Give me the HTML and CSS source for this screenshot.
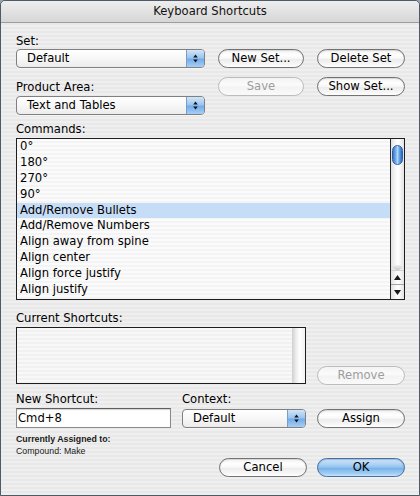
FILE: index.html
```html
<!DOCTYPE html>
<html>
<head>
<meta charset="utf-8">
<title>Keyboard Shortcuts</title>
<link rel="stylesheet" href="styles.css">
</head>
<body>
<div class="window">
  <div class="titlebar">Keyboard Shortcuts</div>
  <div class="content">
    <div class="top">
      <div class="label l-set">Set:</div>
      <div class="popup p-set">
        <span class="popup-text">Default</span>
        <span class="popup-arrows"><svg width="7" height="11" viewBox="0 0 7 11"><path d="M3.5 1.5 L5.8 4.5 H1.2Z M3.5 9.5 L5.8 6.5 H1.2Z" fill="#151515"/></svg></span>
      </div>
      <button class="btn b-new">New Set...</button>
      <button class="btn b-delete">Delete Set</button>
      <div class="label l-area">Product Area:</div>
      <button class="btn disabled b-save">Save</button>
      <button class="btn b-show">Show Set...</button>
      <div class="popup p-area">
        <span class="popup-text">Text and Tables</span>
        <span class="popup-arrows"><svg width="7" height="11" viewBox="0 0 7 11"><path d="M3.5 1.5 L5.8 4.5 H1.2Z M3.5 9.5 L5.8 6.5 H1.2Z" fill="#151515"/></svg></span>
      </div>
    </div>

    <div class="label l-commands">Commands:</div>
    <div class="list">
      <ul class="rows">
        <li>0°</li>
        <li>180°</li>
        <li>270°</li>
        <li>90°</li>
        <li class="selected">Add/Remove Bullets</li>
        <li>Add/Remove Numbers</li>
        <li>Align away from spine</li>
        <li>Align center</li>
        <li>Align force justify</li>
        <li>Align justify</li>
      </ul>
      <div class="scrollbar">
        <div class="sb-track">
          <div class="sb-thumb"></div>
          <div class="sb-cap"></div>
        </div>
        <div class="sb-arrow up"><svg width="7" height="5" viewBox="0 0 7 5"><path d="M3.5 0 L7 5 H0Z" fill="#1a1a1a"/></svg></div>
        <div class="sb-arrow down"><svg width="7" height="5" viewBox="0 0 7 5"><path d="M3.5 5 L7 0 H0Z" fill="#1a1a1a"/></svg></div>
      </div>
    </div>

    <div class="label l-current">Current Shortcuts:</div>
    <div class="current-row">
      <div class="shortcuts-box">
        <div class="sc-area"></div>
        <div class="sc-track"></div>
      </div>
      <button class="btn disabled remove">Remove</button>
    </div>

    <div class="assign-grid">
      <div class="label">New Shortcut:</div>
      <div class="label">Context:</div>
      <div></div>
      <div class="field">Cmd+8</div>
      <div class="popup p-context">
        <span class="popup-text">Default</span>
        <span class="popup-arrows"><svg width="7" height="11" viewBox="0 0 7 11"><path d="M3.5 1.5 L5.8 4.5 H1.2Z M3.5 9.5 L5.8 6.5 H1.2Z" fill="#151515"/></svg></span>
      </div>
      <button class="btn">Assign</button>
    </div>

    <div class="assigned">
      <div class="assigned-title">Currently Assigned to:</div>
      <div class="assigned-value">Compound: Make</div>
    </div>

    <div class="actions">
      <button class="btn">Cancel</button>
      <button class="btn default">OK</button>
    </div>
  </div>
</div>
</body>
</html>
```

FILE: styles.css
```css
* { box-sizing: border-box; }

html, body {
  margin: 0;
  padding: 0;
}

body {
  width: 420px;
  height: 496px;
  background: #9aa2ad;
  font-family: "DejaVu Sans", "Noto Sans", sans-serif;
  font-size: 11.6px;
  color: #000;
  overflow: hidden;
}

.window {
  width: 420px;
  height: 496px;
  border: 1px solid #4f5a68;
  border-radius: 5px 5px 0 0;
  background: repeating-linear-gradient(to bottom, #efefef 0, #efefef 2px, #e8e8e8 2px, #e8e8e8 4px);
  display: flex;
  flex-direction: column;
  overflow: hidden;
}

.titlebar {
  flex: none;
  height: 22px;
  line-height: 21px;
  text-align: center;
  background: linear-gradient(to bottom, #eeeeee, #d6d6d6);
  border-bottom: 1px solid #9d9d9d;
  border-radius: 4px 4px 0 0;
  color: #111;
}

.content {
  flex: 1;
  padding: 0 14px 0 15px;
  display: flex;
  flex-direction: column;
}

.label {
  line-height: 14px;
  white-space: nowrap;
}

/* ---------- top grid ---------- */
.top {
  margin-top: 11px;
  display: grid;
  grid-template-columns: 189px 86px 88px;
  grid-template-rows: 15px 28px 19px 19px;
  column-gap: 13px;
}

.l-set { grid-column: 1; grid-row: 1; }
.p-set { grid-column: 1; grid-row: 2; }
.b-new { grid-column: 2; grid-row: 2; }
.b-delete { grid-column: 3; grid-row: 2; }
.l-area { grid-column: 1; grid-row: 3; align-self: center; }
.b-save { grid-column: 2; grid-row: 3; }
.b-show { grid-column: 3; grid-row: 3; }
.p-area { grid-column: 1; grid-row: 4; }

.top .btn { align-self: start; }

/* ---------- popup ---------- */
.popup {
  height: 19px;
  display: flex;
  align-items: stretch;
  border: 1px solid #808080;
  border-radius: 4px;
  background: linear-gradient(to bottom, #ffffff 0%, #f7f7f7 50%, #ececec 100%);
  box-shadow: 0 1px 0 rgba(255,255,255,0.6);
}

.popup-text {
  flex: 1;
  padding-left: 10px;
  line-height: 17px;
  white-space: nowrap;
}

.popup-arrows {
  width: 18px;
  display: flex;
  align-items: center;
  justify-content: center;
  border-left: 1px solid #7e9cc2;
  border-radius: 0 3px 3px 0;
  background: linear-gradient(to bottom, #d2e5f9 0%, #9cc6f1 45%, #74acea 55%, #a6cff5 100%);
}

.popup-arrows svg { display: block; }

/* ---------- buttons ---------- */
.btn {
  font: inherit;
  color: #000;
  margin: 0;
  padding: 0;
  height: 19px;
  line-height: 17px;
  text-align: center;
  border: 1px solid #727272;
  border-radius: 10px;
  background: linear-gradient(to bottom, #f2f2f2 0%, #ffffff 30%, #f6f6f6 50%, #ebebeb 52%, #f7f7f7 85%, #ffffff 100%);
  box-shadow: inset 0 1px 1px rgba(0,0,0,0.12);
  white-space: nowrap;
}

.btn.disabled {
  color: #9d9d9d;
  border-color: #bcbcbc;
  background: linear-gradient(to bottom, #f3f3f3 0%, #fbfbfb 40%, #f3f3f3 55%, #fafafa 100%);
  box-shadow: none;
}

.btn.default {
  border-color: #46709f;
  background: linear-gradient(to bottom, #cfe4fa 0%, #a9d0f4 35%, #8cc0ef 50%, #78b2ea 55%, #9fcdf4 85%, #c7e4fb 100%);
  box-shadow: inset 0 1px 1px rgba(30,60,110,0.25);
}

/* ---------- commands list ---------- */
.l-commands { margin-top: 7px; }

.list {
  margin-top: 2px;
  height: 162px;
  border: 1px solid #1e1e1e;
  display: flex;
  background: repeating-linear-gradient(to bottom, #fbfbfb 0, #fbfbfb 2px, #f4f4f4 2px, #f4f4f4 4px);
}

.rows {
  flex: 1;
  list-style: none;
  margin: 0;
  padding: 0;
  overflow: hidden;
}

.rows li {
  height: 15.9px;
  line-height: 15.9px;
  padding-left: 3px;
  white-space: nowrap;
}

.rows li.selected {
  background: #c6ddf8;
}

.scrollbar {
  width: 14px;
  flex: none;
  border-left: 1px solid #2a2a2a;
  display: flex;
  flex-direction: column;
  background: linear-gradient(to right, #e2e2e2 0%, #f7f7f7 35%, #ffffff 55%, #f0f0f0 80%, #e3e3e3 100%);
}

.sb-track {
  flex: 1;
  display: flex;
  flex-direction: column;
  justify-content: space-between;
  padding: 6px 1px 0 1px;
}

.sb-thumb {
  height: 20px;
  border: 1px solid #2d5ea6;
  border-radius: 6px;
  background: linear-gradient(to right, #3a76cf 0%, #7fb5ee 35%, #b0d6f7 50%, #5b98e2 75%, #2c67c2 100%);
}

.sb-cap {
  height: 5px;
  border-radius: 0 0 6px 6px;
  background: linear-gradient(to bottom, #f0f0f0, #c9c9c9);
}

.sb-arrow {
  height: 14px;
  display: flex;
  align-items: center;
  justify-content: center;
}

.sb-arrow.up { border-top: 1px solid #d0d0d0; }
.sb-arrow.down { border-top: 1px solid #a4a4a4; height: 15px; }

.sb-arrow svg { display: block; }

/* ---------- current shortcuts ---------- */
.l-current { margin-top: 11px; }

.current-row {
  margin-top: 2px;
  display: flex;
  justify-content: space-between;
  align-items: flex-end;
}

.shortcuts-box {
  width: 290px;
  height: 57px;
  border: 1px solid #1e1e1e;
  display: flex;
  background: repeating-linear-gradient(to bottom, #f8f8f8 0, #f8f8f8 2px, #f1f1f1 2px, #f1f1f1 4px);
}

.sc-area { flex: 1; }

.sc-track {
  width: 13px;
  background: linear-gradient(to right, #cfcfcf 0%, #ececec 30%, #ffffff 60%, #f3f3f3 100%);
}

.remove {
  width: 88px;
  margin-bottom: -1px;
}

/* ---------- assign ---------- */
.assign-grid {
  margin-top: 8px;
  display: grid;
  grid-template-columns: 155px 124px 88px;
  justify-content: space-between;
  grid-template-rows: 16px 20px;
  align-items: end;
}

.assign-grid .label { align-self: start; }

.field {
  height: 20px;
  border: 1px solid #8a8a8a;
  border-top-color: #5f5f5f;
  background: #ffffff;
  box-shadow: inset 0 1px 1px rgba(0,0,0,0.18);
  padding-left: 1px;
  line-height: 18px;
}

/* ---------- assigned ---------- */
.assigned {
  margin-top: 5px;
  font-family: "Liberation Sans", Arial, sans-serif;
  font-size: 8.8px;
  line-height: 12px;
  color: #1a1a1a;
}

.assigned-title { font-weight: bold; }

.actions {
  margin-top: 1px;
  display: flex;
  justify-content: flex-end;
  gap: 10px;
}

.actions .btn { width: 88px; }
```
